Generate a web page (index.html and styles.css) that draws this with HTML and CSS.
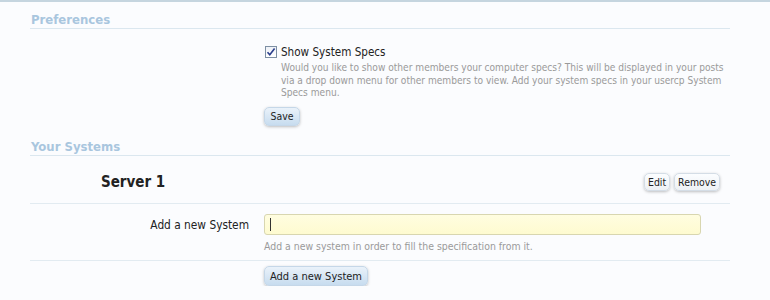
FILE: index.html
```html
<!DOCTYPE html>
<html lang="en">

<head>
  <meta charset="UTF-8">
  <title>Preferences</title>
  <link rel="stylesheet" href="styles.css">
</head>

<body>

  <div class="page">

    <!-- Preferences -->
    <h3 class="section-head">Preferences</h3>

    <div class="ctrl-unit prefs">
      <div class="ctrl-label"></div>
      <div class="ctrl-input">
        <label class="check">
          <span class="checkbox">
            <svg viewBox="0 0 12 12" width="12" height="12">
              <path d="M2.5 6.2 L4.8 8.8 L9.6 2.6" fill="none" stroke="#2b3f8c" stroke-width="1.6" />
            </svg>
          </span>
          Show System Specs
        </label>
        <p class="explain">Would you like to show other members your computer specs? This will be displayed in your posts
          via a drop down menu for other members to view. Add your system specs in your usercp System
          Specs menu.</p>
        <button class="button primary save-btn">Save</button>
      </div>
    </div>

    <!-- Systems -->
    <h3 class="section-head">Your Systems</h3>

    <div class="system-row">
      <div class="system-name">Server 1</div>
      <div class="system-actions">
        <button class="button small">Edit</button>
        <button class="button small">Remove</button>
      </div>
    </div>

    <div class="ctrl-unit new-system">
      <div class="ctrl-label">Add a new System</div>
      <div class="ctrl-input">
        <div class="textbox"><span class="caret"></span></div>
        <p class="explain">Add a new system in order to fill the specification from it.</p>
      </div>
    </div>

    <div class="ctrl-unit submit">
      <div class="ctrl-label"></div>
      <div class="ctrl-input">
        <button class="button primary">Add a new System</button>
      </div>
    </div>

  </div>

</body>

</html>
```

FILE: styles.css
```css
/* General Reset */
body {
  margin: 0;
  padding: 0;
  background: #fbfcfe;
  font-family: 'DejaVu Sans Condensed', 'DejaVu Sans', sans-serif;
  font-size: 11px;
  color: #222;
  border-top: 2px solid #c5d5df;
}

.page {
  width: 700px;
  padding: 0 40px 0 30px;
}

/* Section headings */
.section-head {
  margin: 0;
  height: 27px;
  line-height: 36px;
  font-size: 13px;
  font-weight: bold;
  color: #a9c6de;
  border-bottom: 1px solid #dbe7ef;
  padding-left: 1px;
  box-sizing: border-box;
}

/* Form rows */
.ctrl-unit {
  display: flex;
}

.ctrl-label {
  width: 219px;
  padding-right: 15px;
  text-align: right;
  font-size: 11.8px;
}

.ctrl-input {
  flex: 1;
}

.prefs {
  padding: 16px 0 3px;
}

.check {
  display: flex;
  align-items: center;
  font-size: 11.6px;
  color: #222;
  height: 14px;
}

.checkbox {
  width: 12px;
  height: 12px;
  border: 1px solid #7d8fa3;
  background: linear-gradient(#eef1f7, #fff);
  box-sizing: border-box;
  margin: 0 4px 0 1px;
  display: flex;
  align-items: center;
  justify-content: center;
}

.checkbox svg {
  flex: none;
}

.explain {
  margin: 3px 0 0 17px;
  color: #9a9a9a;
  font-size: 10.1px;
  line-height: 12.5px;
  width: 446px;
}

/* Buttons */
.button {
  font-family: inherit;
  font-size: 10.4px;
  color: #222;
  border: 1px solid #d4dde6;
  border-radius: 5px;
  background: linear-gradient(#fbfdff, #eef1f4);
  box-shadow: 0 1px 3px rgba(0, 0, 0, 0.25);
  padding: 0 6px;
  height: 18px;
  cursor: pointer;
}

.button.primary {
  background: linear-gradient(#eaf2fa, #c7dcef);
  border-color: #c5d7e8;
}

.save-btn {
  margin-top: 7px;
  height: 19px;
  width: 36px;
  padding: 0;
}

.button.small {
  height: 18px;
  padding: 0 3px;
}

/* System list */
.system-row {
  display: flex;
  align-items: center;
  justify-content: space-between;
  height: 48px;
  border-bottom: 1px solid #e2ebf1;
  box-sizing: border-box;
  padding: 5px 10px 0 71px;
}

.system-name {
  font-size: 15px;
  font-weight: bold;
  color: #222;
}

.system-actions {
  display: flex;
  gap: 4px;
}

/* New system */
.new-system {
  padding: 10px 0 8px;
  border-bottom: 1px solid #e2ebf1;
}

.new-system .ctrl-label {
  line-height: 22px;
}

.textbox {
  width: 437px;
  height: 21px;
  box-sizing: border-box;
  border: 1px solid #d8d6b0;
  border-radius: 3px;
  background: linear-gradient(#fffde0, #fefbd0);
  padding: 3px 4px;
}

.caret {
  display: block;
  width: 1px;
  height: 13px;
  background: #333;
  margin-left: 1px;
}

.new-system .explain {
  margin: 5px 0 0;
  font-size: 10.4px;
}

.submit {
  padding-top: 5px;
}

.submit .button {
  height: 20px;
  font-size: 11px;
  padding: 0 5px;
}
```
